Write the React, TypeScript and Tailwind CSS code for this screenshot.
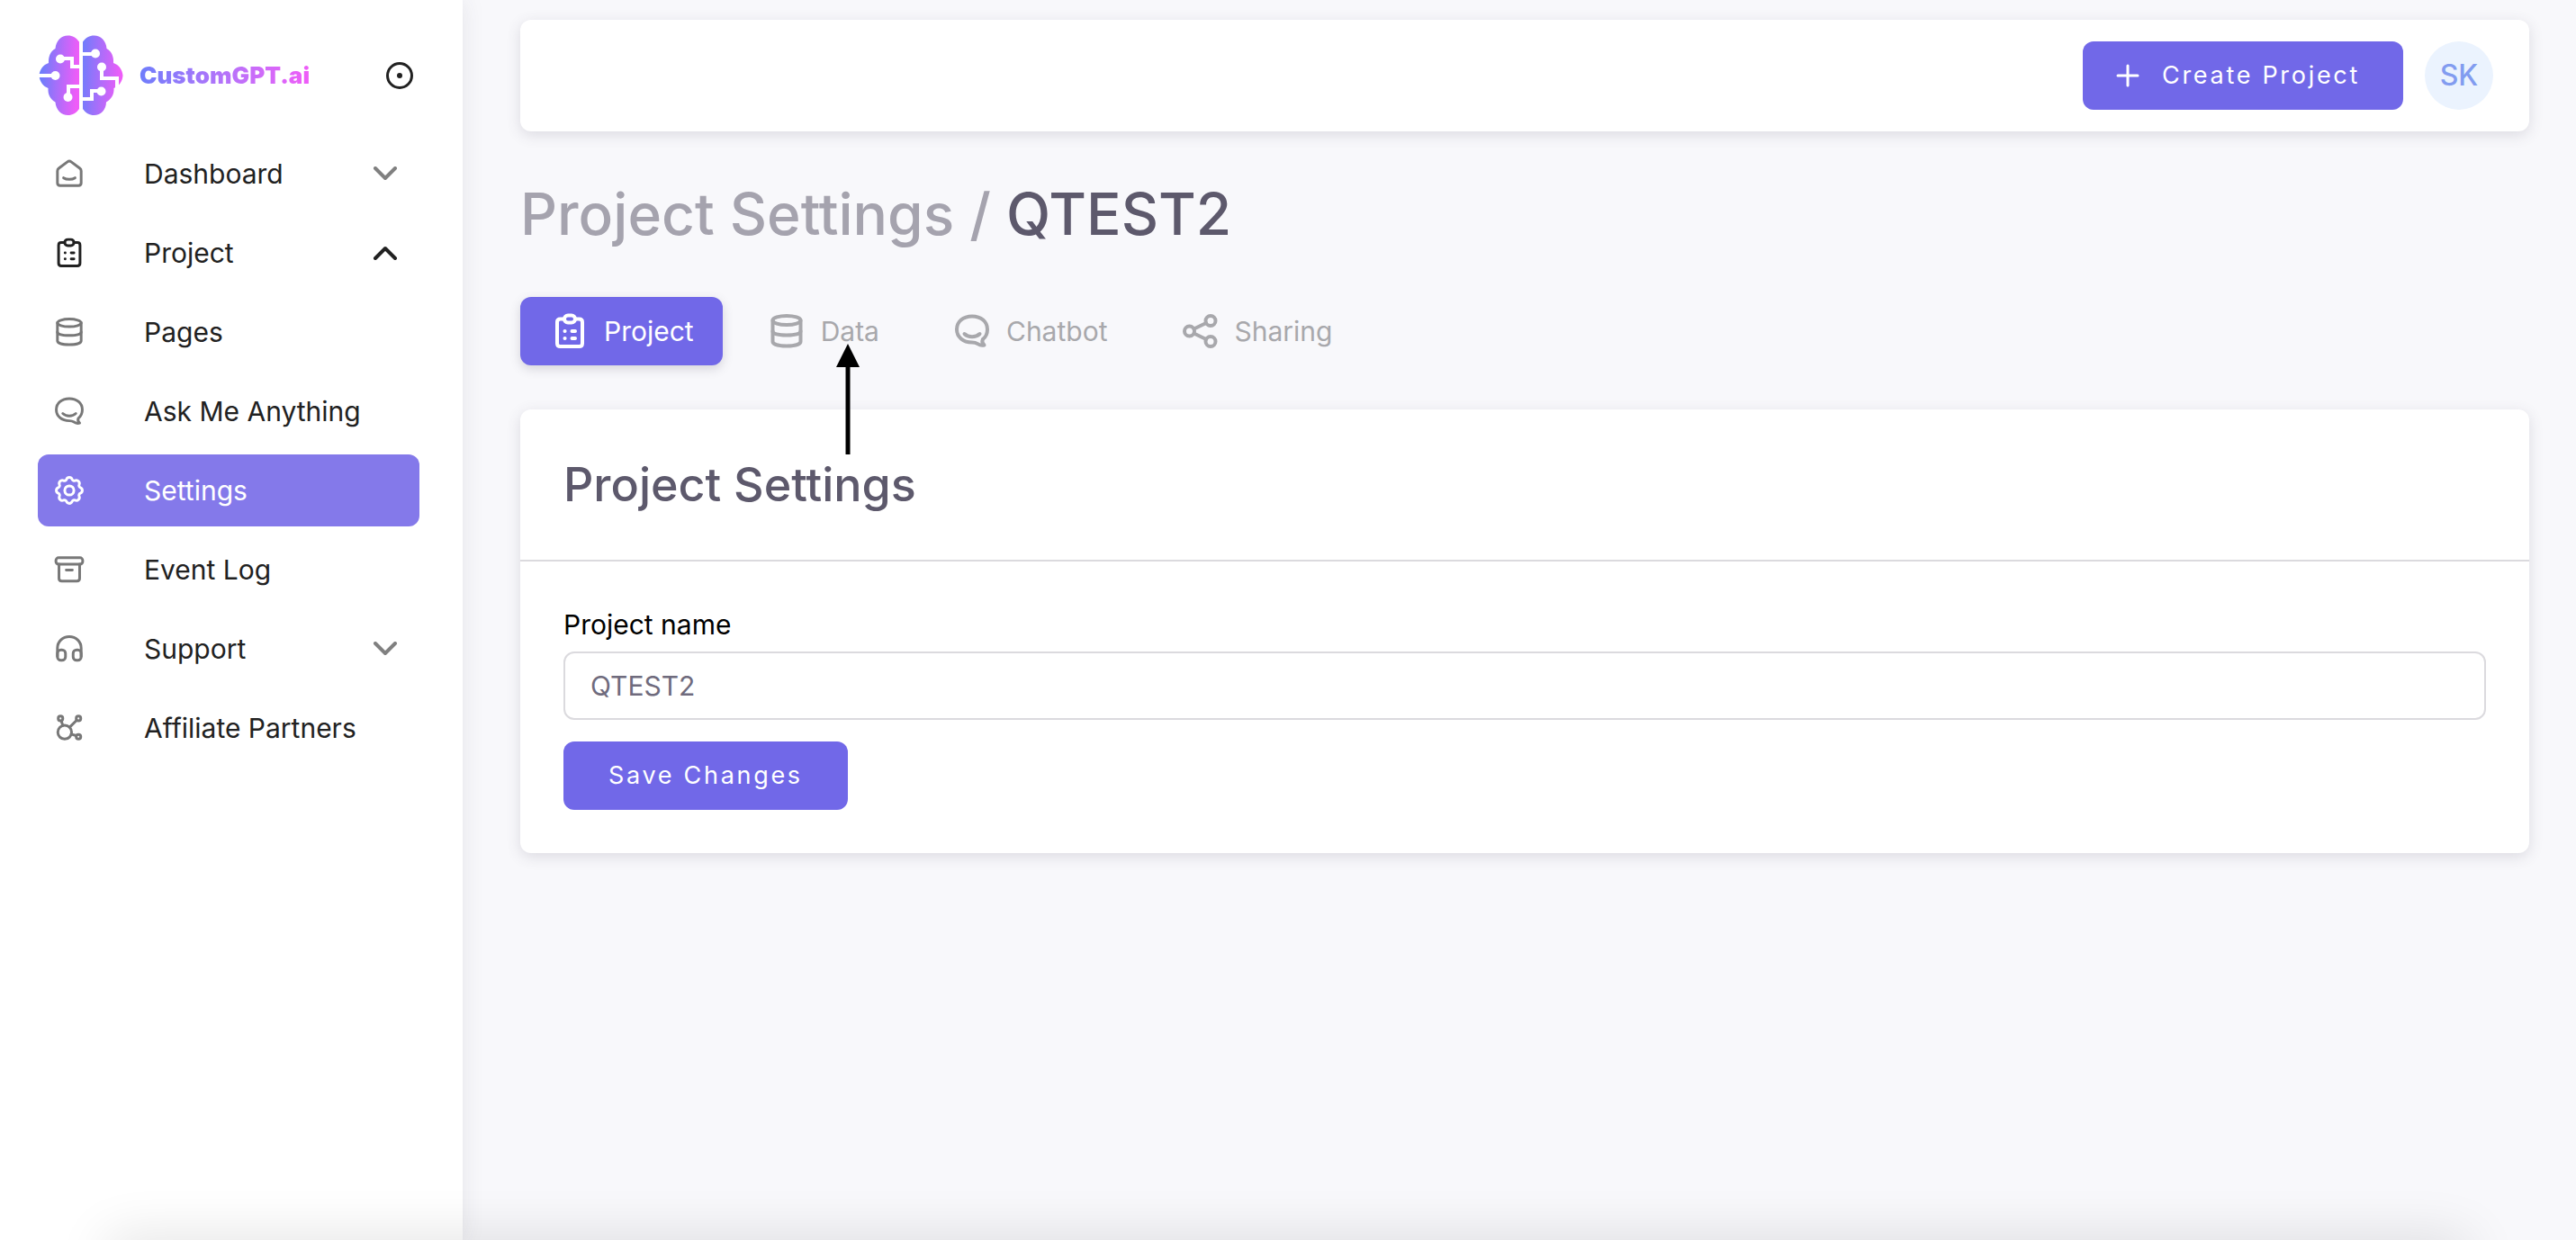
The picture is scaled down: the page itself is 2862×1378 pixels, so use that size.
import React, { useState } from 'react';
import clsx from 'clsx';

type IconProps = { className?: string };

const Icon: React.FC<IconProps & { strokeWidth?: number; children: React.ReactNode }> = ({
  className,
  strokeWidth = 3.5,
  children,
}) => (
  <svg
    viewBox="0 0 40 40"
    fill="none"
    stroke="currentColor"
    strokeWidth={strokeWidth}
    strokeLinecap="round"
    strokeLinejoin="round"
    className={clsx('shrink-0', className)}
    aria-hidden="true"
  >
    {children}
  </svg>
);

const HomeIcon: React.FC<IconProps> = ({ className }) => (
  <Icon className={className}>
    <path d="M4.500 16.500c0-1.500.600-2.700 1.800-3.600L17.500 4.500c1.500-1.100 3.500-1.100 5 0l11.200 8.400c1.200.900 1.800 2.100 1.800 3.600V32c0 2.200-1.300 3.500-3.500 3.500H8c-2.200 0-3.500-1.300-3.500-3.500z" />
    <path d="M12.500 25.500c4 2.600 11 2.600 15 0" />
  </Icon>
);

const ClipboardIcon: React.FC<IconProps> = ({ className }) => (
  <Icon className={className}>
    <path d="M14 6.500H9.500C7.300 6.500 6 7.800 6 10v23.500C6 35.700 7.300 37 9.500 37h21c2.200 0 3.500-1.300 3.500-3.500V10c0-2.200-1.300-3.500-3.500-3.500H26" />
    <rect x="14" y="2.500" width="12" height="8" rx="4" />
    <path d="M14.500 20h.1M22.500 20h3.500M14.500 28h.1M22.500 28h3.500" />
  </Icon>
);

const DatabaseIcon: React.FC<IconProps> = ({ className }) => (
  <Icon className={className}>
    <ellipse cx="20" cy="8" rx="15.500" ry="5" />
    <path d="M4.500 8v23.500c0 3 6.500 5 15.500 5s15.500-2 15.500-5V8" />
    <path d="M4.500 20c0 3 6.500 4.500 15.500 4.500s15.500-1.500 15.500-4.500" />
  </Icon>
);

const ChatIcon: React.FC<IconProps> = ({ className }) => (
  <Icon className={className}>
    <path d="M20 3.500C10 3.500 3 9.500 3 18s7 14.500 17 14.500c2.500 0 4.300.400 6.200 1.600 2.300 1.500 4.800 2.100 7.300 1.400-1.900-1.800-2.700-4-1.700-6.300C35.200 26.600 37 22.800 37 18c0-8.500-7-14.500-17-14.500z" />
    <path d="M11.500 23c4.300 4.200 12.700 4.200 17 0" />
  </Icon>
);

const GearIcon: React.FC<IconProps> = ({ className }) => (
  <Icon className={className}>
    <path d="M16.300 5.500c1.300-3.300 6.100-3.300 7.400 0 .600 1.600 2.400 2.300 3.900 1.600 3.300-1.400 6.700 2 5.300 5.300-.700 1.500 0 3.300 1.600 3.900 3.300 1.300 3.300 6.100 0 7.400-1.600.600-2.300 2.400-1.600 3.900 1.400 3.300-2 6.700-5.300 5.300-1.500-.700-3.300 0-3.900 1.600-1.300 3.300-6.100 3.300-7.400 0-.600-1.600-2.400-2.300-3.900-1.600-3.300 1.400-6.700-2-5.300-5.300.700-1.500 0-3.300-1.600-3.900-3.300-1.300-3.300-6.100 0-7.400 1.600-.600 2.300-2.400 1.600-3.900-1.400-3.300 2-6.700 5.300-5.300 1.500.700 3.300 0 3.900-1.600z" />
    <circle cx="20" cy="20" r="6" />
  </Icon>
);

const ArchiveIcon: React.FC<IconProps> = ({ className }) => (
  <Icon className={className}>
    <rect x="2.500" y="4.500" width="35" height="8.500" rx="3.500" />
    <path d="M6.500 13v18.500c0 2.200 1.300 3.500 3.500 3.500h20c2.200 0 3.500-1.300 3.500-3.500V13M16 20.500h8" />
  </Icon>
);

const HeadphonesIcon: React.FC<IconProps> = ({ className }) => (
  <Icon className={className}>
    <path d="M4.500 30V19C4.500 10.500 11.400 4 20 4s15.500 6.500 15.500 15v11" />
    <rect x="4.500" y="21.500" width="10.500" height="13.500" rx="4.500" />
    <rect x="25" y="21.500" width="10.500" height="13.500" rx="4.500" />
  </Icon>
);

const AffiliateIcon: React.FC<IconProps> = ({ className }) => (
  <Icon className={className}>
    <circle cx="14" cy="25.500" r="9" />
    <circle cx="8.500" cy="7.500" r="3" />
    <circle cx="32" cy="7.500" r="3" />
    <circle cx="32" cy="31.500" r="3" />
    <path d="M9.500 11l2 5.500M29.500 10L20.500 19M22.500 28l6.500 2" />
  </Icon>
);

const ShareIcon: React.FC<IconProps> = ({ className }) => (
  <Icon className={className}>
    <circle cx="8.500" cy="20" r="5.500" />
    <circle cx="32" cy="8.500" r="5.500" />
    <circle cx="32" cy="31.500" r="5.500" />
    <path d="M13.500 17.500l13.500-6.500M13.500 22.500l13.500 6.500" />
  </Icon>
);

const Chevron: React.FC<{ up?: boolean }> = ({ up }) => (
  <svg
    viewBox="0 0 28 16"
    fill="none"
    stroke="currentColor"
    strokeWidth={4}
    strokeLinecap="round"
    strokeLinejoin="round"
    className={clsx('ml-auto h-4 w-7 shrink-0', up ? 'text-[#212121]' : 'text-[#808080]')}
    aria-hidden="true"
  >
    <path d={up ? 'M3 14L14 3l11 11' : 'M3 2l11 11L25 2'} />
  </svg>
);

const BrainLogo: React.FC = () => (
  <svg viewBox="0 0 95 90" className="h-[90px] w-[95px] shrink-0" aria-hidden="true">
    <defs>
      <linearGradient id="brain-left" x1="0" x2="1" y1="0" y2="0.1">
        <stop offset="0.1" stopColor="#6e7dfb" />
        <stop offset="1" stopColor="#ef5cf8" />
      </linearGradient>
      <linearGradient id="brain-right" x1="0" x2="1" y1="0" y2="0.1">
        <stop offset="0" stopColor="#6e7dfb" />
        <stop offset="1" stopColor="#ef5cf8" />
      </linearGradient>
    </defs>
    <path
      fill="url(#brain-left)"
      d="M46 7.500C43 3 38.500.500 33.500.500 26 .500 20 6.500 19.500 15 14 18 11.500 24 12 31 6 33 2 38.500 1.500 45 2 51.500 6 57 11.500 59c-.500 7 2.500 12.500 8 15.500C20 83 26 89 33.500 89c5 0 9.500-2.500 12.500-7z"
    />
    <path
      fill="url(#brain-right)"
      d="M50 7.500C53 3 57.500.500 62.500.500 70 .500 76 6.500 76.500 15 82 18 84.500 24 84 31c6 2 10 7.500 10.500 14-.500 6.500-4.500 12-10 14 .500 7-3 12.500-8.500 15.500C76 83 70 89 62.500 89c-5 0-9.500-2.500-12.500-7z"
    />
    <g fill="none" stroke="#ffffff" strokeWidth="4">
      <path d="M25 26h13v9h8M0 45h19M34 68V57h12M50 21h15M71 35v13h17v11M50 71h10v-9h11" />
    </g>
    <g fill="#ffffff">
      <circle cx="25" cy="26.500" r="5" />
      <circle cx="19.500" cy="45" r="5" />
      <circle cx="33.500" cy="69" r="5" />
      <circle cx="64" cy="20.500" r="5" />
      <circle cx="71" cy="35.500" r="5" />
      <circle cx="70.500" cy="62.500" r="5" />
    </g>
  </svg>
);

type NavItem = {
  name: string;
  icon: React.FC<IconProps>;
  children?: boolean;
  open?: boolean;
  active?: boolean;
};

const navigation: NavItem[] = [
  { name: 'Dashboard', icon: HomeIcon, children: true },
  { name: 'Project', icon: ClipboardIcon, children: true, open: true },
  { name: 'Pages', icon: DatabaseIcon },
  { name: 'Ask Me Anything', icon: ChatIcon },
  { name: 'Settings', icon: GearIcon, active: true },
  { name: 'Event Log', icon: ArchiveIcon },
  { name: 'Support', icon: HeadphonesIcon, children: true },
  { name: 'Affiliate Partners', icon: AffiliateIcon },
];

const tabs = [
  { name: 'Project', icon: ClipboardIcon },
  { name: 'Data', icon: DatabaseIcon },
  { name: 'Chatbot', icon: ChatIcon },
  { name: 'Sharing', icon: ShareIcon },
];

const Sidebar: React.FC = () => (
  <aside className="flex w-[514px] shrink-0 flex-col bg-white pt-[39px] pr-12 pl-[42px] shadow-[0_0_24px_rgba(60,60,80,0.10)]">
    <div className="flex items-center">
      <a href="#home" className="flex items-center gap-[18px]">
        <BrainLogo />
        <span className="bg-linear-to-r from-[#6e7dfb] to-[#ef5cf8] bg-clip-text text-[26px] leading-10 font-black text-transparent">
          CustomGPT.ai
        </span>
      </a>
      <button type="button" aria-label="Pin sidebar" className="mr-[6px] ml-auto text-[#212121]">
        <svg viewBox="0 0 32 32" className="size-8" fill="none" aria-hidden="true">
          <circle cx="16" cy="16" r="13.500" stroke="currentColor" strokeWidth="3" />
          <circle cx="16" cy="16" r="3" fill="currentColor" />
        </svg>
      </button>
    </div>

    <nav className="mt-6 flex flex-col gap-2">
      {navigation.map((item) => (
        <a
          key={item.name}
          href="#nav"
          className={clsx(
            'flex h-20 items-center rounded-xl pr-6 pl-[18px] text-[30px]',
            item.active ? 'bg-[#8479ea] text-white' : 'text-[#212121]'
          )}
        >
          <item.icon
            className={clsx('mr-[66px] size-[34px]', !item.active && !item.open && 'text-[#787878]')}
          />
          <span className="whitespace-nowrap">{item.name}</span>
          {item.children && <Chevron up={item.open} />}
        </a>
      ))}
    </nav>
  </aside>
);

const TopBar: React.FC = () => (
  <header className="flex items-center justify-end gap-6 rounded-xl bg-white px-10 py-6 shadow-[0_4px_16px_rgba(75,70,92,0.16)]">
    <button
      type="button"
      className="flex h-[76px] items-center gap-6 rounded-xl bg-[#7168e8] pr-12 pl-9 text-[27px] tracking-widest text-white"
    >
      <svg viewBox="0 0 28 28" className="size-7" stroke="currentColor" strokeWidth="3" strokeLinecap="round" aria-hidden="true">
        <path d="M14 3v22M3 14h22" />
      </svg>
      Create Project
    </button>
    <button
      type="button"
      className="flex size-[76px] items-center justify-center rounded-full bg-[#ebf3fe] text-[32px] font-medium text-[#829cf0]"
    >
      SK
    </button>
  </header>
);

const ArrowPointer: React.FC = () => (
  <svg viewBox="0 0 26 123" className="absolute top-[52px] right-[54px] h-[123px] w-[26px]" aria-hidden="true">
    <path d="M13 0l13 26H15.500v97h-5V26H0z" fill="#000000" />
  </svg>
);

const Tabs: React.FC = () => {
  const [current, setCurrent] = useState('Project');

  return (
    <div role="tablist" className="flex gap-4">
      {tabs.map((tab) => (
        <div key={tab.name} className="relative">
          <button
            type="button"
            role="tab"
            aria-selected={current === tab.name}
            onClick={() => setCurrent(tab.name)}
            className={clsx(
              'flex h-[76px] items-center gap-[18px] rounded-xl pr-8 pl-[35px] text-[30px]',
              current === tab.name
                ? 'bg-[#7168e8] text-white shadow-[0_4px_12px_rgba(75,70,92,0.2)]'
                : 'text-[#a8a8ac]'
            )}
          >
            <tab.icon className="size-10 stroke-4" />
            {tab.name}
          </button>
          {tab.name === 'Data' && <ArrowPointer />}
        </div>
      ))}
    </div>
  );
};

const SettingsCard: React.FC = () => {
  const [name, setName] = useState('QTEST2');

  return (
    <section className="rounded-xl bg-white shadow-[0_4px_16px_rgba(75,70,92,0.16)]">
      <div className="border-b-2 border-[#dbdade] px-12 py-12">
        <h2 className="text-[52px] leading-[71px] font-medium text-[#5d596c]">Project Settings</h2>
      </div>
      <form className="flex flex-col items-start p-12" onSubmit={(e) => e.preventDefault()}>
        <label htmlFor="project-name" className="mb-2 text-[30px] leading-[44px] text-black">
          Project name
        </label>
        <input
          id="project-name"
          type="text"
          value={name}
          onChange={(e) => setName(e.target.value)}
          className="h-[76px] w-full rounded-xl border-2 border-[#dbdade] bg-white px-7 text-[30px] text-[#6f6b7d] outline-none"
        />
        <button
          type="submit"
          className="mt-6 h-[76px] rounded-xl bg-[#7168e8] px-[50px] text-[27px] tracking-widest text-white"
        >
          Save Changes
        </button>
      </form>
    </section>
  );
};

export default function App() {
  return (
    <div className="relative flex min-h-screen overflow-hidden bg-[#f8f8fb] font-['Inter','Liberation_Sans',sans-serif]">
      <Sidebar />
      <main className="flex min-w-0 flex-1 flex-col pt-[22px] pr-[52px] pl-16">
        <TopBar />
        <h1 className="mt-12 mb-12 text-[64px] leading-[88px] font-medium text-[#a5a3ae]">
          Project Settings / <span className="text-[#5d596c]">QTEST2</span>
        </h1>
        <Tabs />
        <div className="mt-[49px]">
          <SettingsCard />
        </div>
      </main>
      {/* soft shade along the bottom edge */}
      <div className="pointer-events-none absolute inset-x-[120px] top-full h-10 shadow-[0_0_60px_rgba(0,0,0,0.14)]" />
    </div>
  );
}
